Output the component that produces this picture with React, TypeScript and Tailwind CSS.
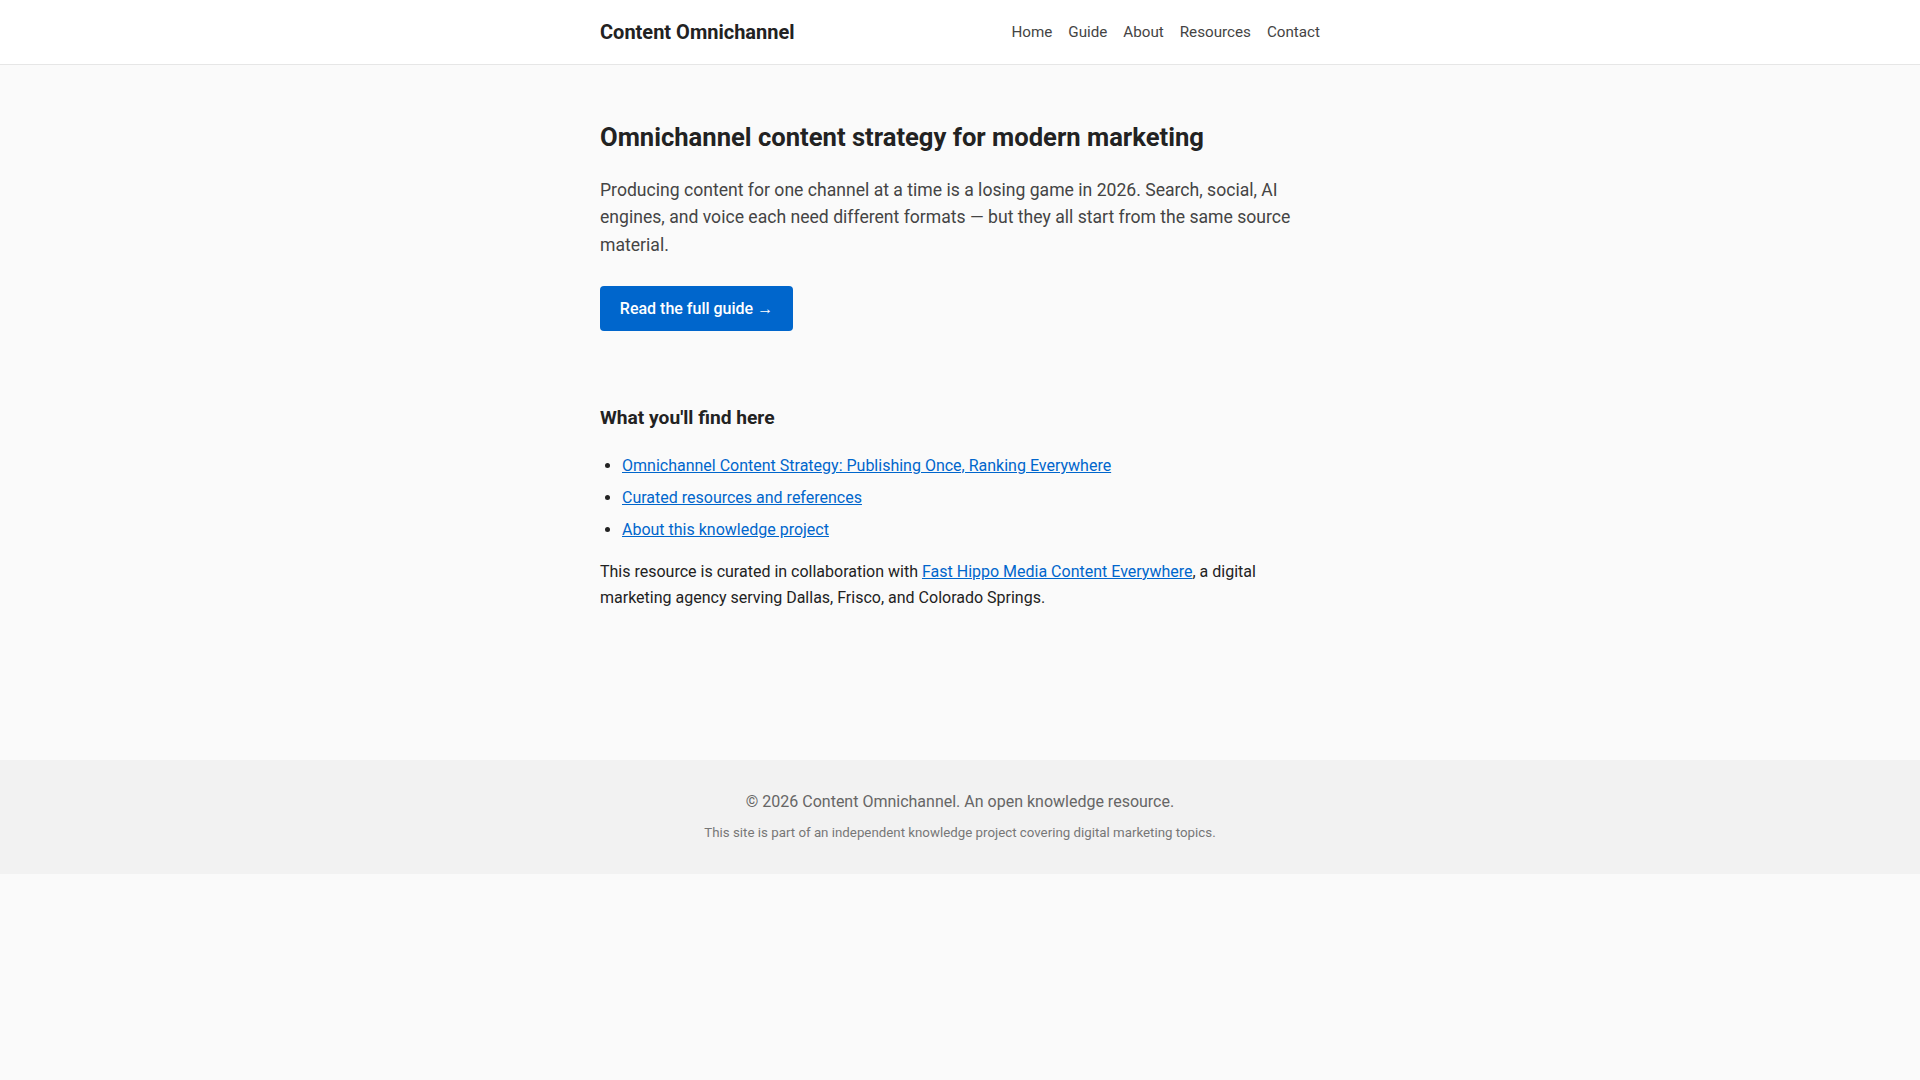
const navItems = ['Home', 'Guide', 'About', 'Resources', 'Contact']

const links = [
  'Omnichannel Content Strategy: Publishing Once, Ranking Everywhere',
  'Curated resources and references',
  'About this knowledge project',
]

const App = () => {
  return (
    <div className="min-h-screen bg-[#fafafa] text-[#222] font-['Roboto',sans-serif]">
      <header className="bg-white border-b border-[#e6e6e6]">
        <div className="mx-auto flex h-[64px] max-w-[720px] items-center justify-between">
          <a href="#" className="text-[20px] font-bold text-[#222]">
            Content Omnichannel
          </a>
          <nav className="flex gap-4 text-[15.2px] text-[#444]">
            {navItems.map((item) => (
              <a key={item} href="#">
                {item}
              </a>
            ))}
          </nav>
        </div>
      </header>

      <main className="mx-auto max-w-[720px] pt-[57px] pb-[150px]">
        <section>
          <h1 className="text-[25.6px] font-bold leading-[1.2] text-[#222]">
            Omnichannel content strategy for modern marketing
          </h1>
          <p className="mt-[24px] text-[17.6px] leading-[27.6px] text-[#444]">
            Producing content for one channel at a time is a losing game in 2026. Search, social, AI engines, and voice
            each need different formats — but they all start from the same source material.
          </p>
          <a
            href="#"
            className="mt-[27px] inline-flex h-[45px] w-[193px] items-center justify-center rounded bg-[#0066cc] text-[16px] font-medium text-white"
          >
            Read the full guide →
          </a>
        </section>

        <section className="mt-[75px]">
          <h2 className="text-[19.2px] font-bold leading-[1.3] text-[#222]">What you'll find here</h2>
          <ul className="mt-[22px] list-disc space-y-[6.4px] pl-[22px] text-[16px] leading-[1.6] marker:text-[#222]">
            {links.map((link) => (
              <li key={link}>
                <a href="#" className="text-[#0066cc] underline">
                  {link}
                </a>
              </li>
            ))}
          </ul>
          <p className="mt-[16px] text-[16px] leading-[1.6] text-[#222]">
            This resource is curated in collaboration with{' '}
            <a href="#" className="text-[#0066cc] underline">
              Fast Hippo Media Content Everywhere
            </a>
            , a digital marketing agency serving Dallas, Frisco, and Colorado Springs.
          </p>
        </section>
      </main>

      <footer className="bg-[#f2f2f2] pt-[29px] pb-[31px] text-center">
        <p className="text-[16px] leading-[1.6] text-[#666]">© 2026 Content Omnichannel. An open knowledge resource.</p>
        <p className="mt-[8px] text-[13.3px] leading-[20px] text-[#777]">
          This site is part of an independent knowledge project covering digital marketing topics.
        </p>
      </footer>
    </div>
  )
}

export default App
